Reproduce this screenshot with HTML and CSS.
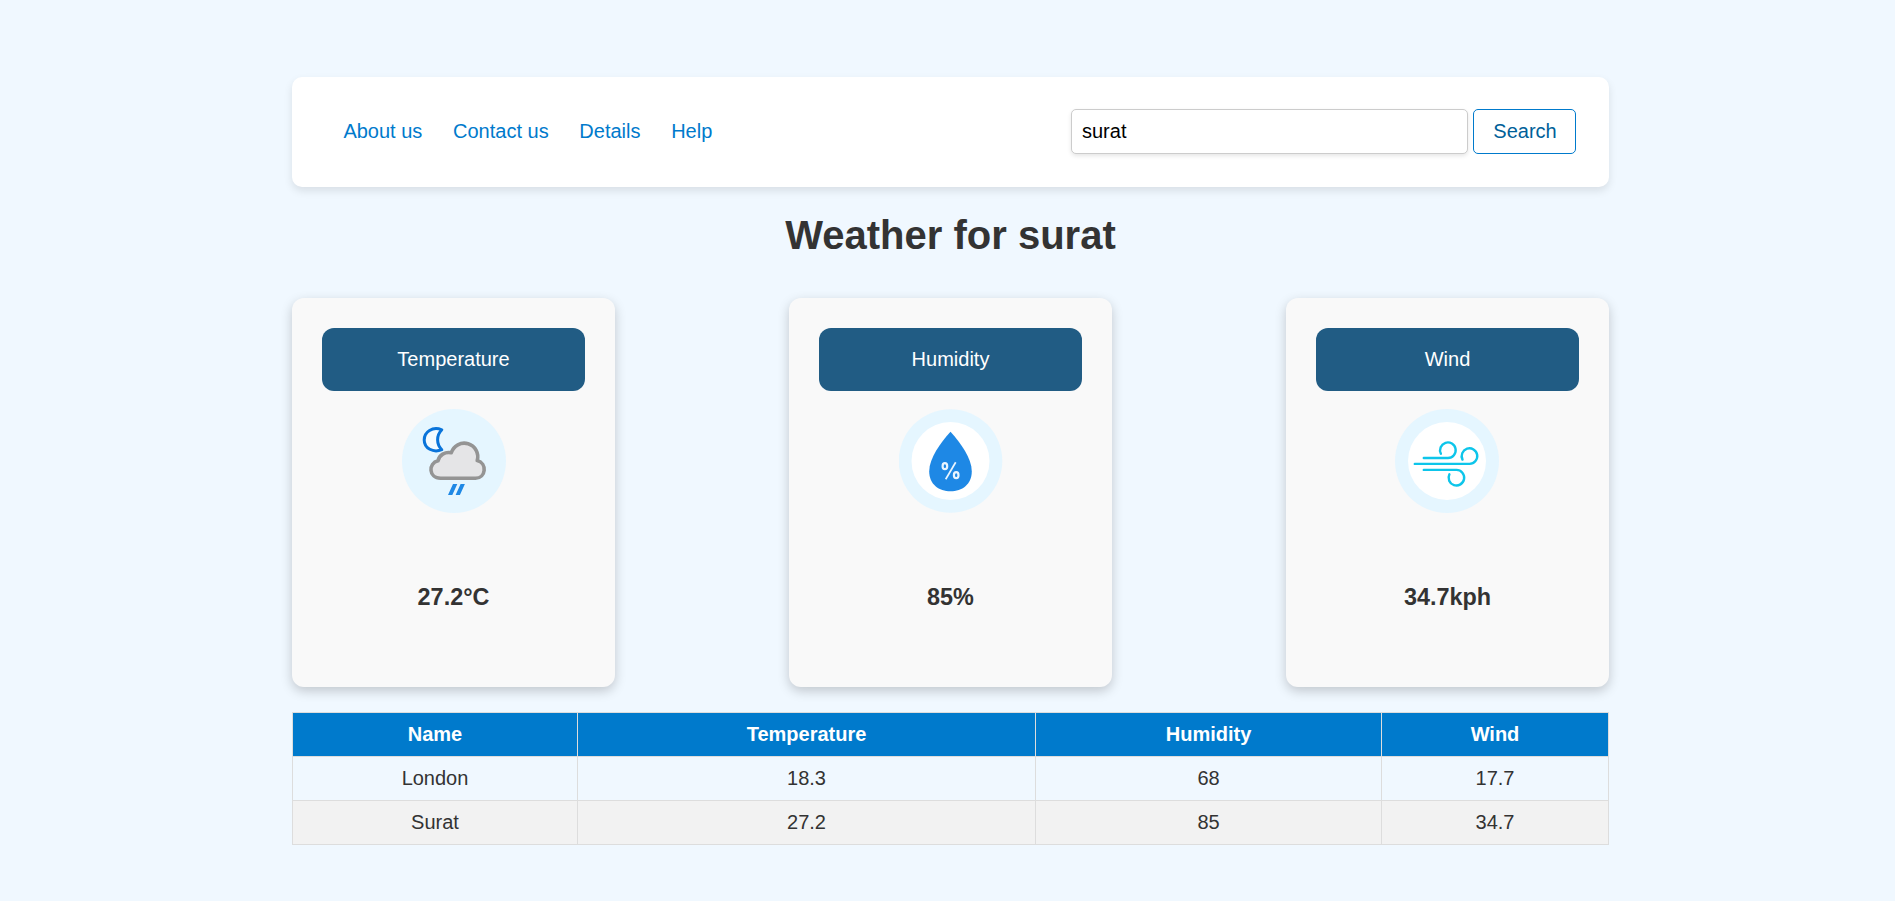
FILE: index.html
```html
<!DOCTYPE html>
<html lang="en">
<head>
<meta charset="utf-8">
<title>Weather</title>
<link rel="stylesheet" href="styles.css">
</head>
<body>
<div class="container">
  <header class="navbar">
    <nav class="links">
      <a href="#">About us</a>
      <a href="#">Contact us</a>
      <a href="#">Details</a>
      <a href="#">Help</a>
    </nav>
    <form class="search">
      <input class="search-input" type="text" value="surat">
      <button class="search-button" type="button">Search</button>
    </form>
  </header>
  <h1 class="title">Weather for surat</h1>
  <section class="cards">
    <article class="card">
      <div class="card-label">Temperature</div>
      <svg class="icon" viewBox="0 0 104 104">
        <circle cx="52" cy="52" r="52" fill="#e5f6ff"/>
        <path d="M39.800 20.800C30.500 17 22.200 23 22.200 31c0 8.300 9 13.200 17.600 9.700-5.600-5.700-5.600-14.200 0-19.900z" fill="#f4fbff" stroke="#0a74da" stroke-width="3" stroke-linejoin="round"/>
        <path d="M38.500 69.200C26.500 69.200 26 54 36 51.800C37.200 46 43 42.500 49.300 43.800A13.300 13.300 0 0 1 75.200 51.600C85.500 54 84 69.200 73.500 69.200z" fill="#e5e5e7" stroke="#949494" stroke-width="3.600" stroke-linejoin="round"/>
        <path d="M51 75h4.300l-5 11h-4.300zM58.600 75h4.300l-5 11h-4.300z" fill="#1e88e5"/>
      </svg>
      <h3 class="value">27.2°C</h3>
    </article>
    <article class="card">
      <div class="card-label">Humidity</div>
      <svg class="icon" viewBox="0 0 104 104">
        <circle cx="51.500" cy="52" r="51.800" fill="#e5f6ff"/>
        <circle cx="51.500" cy="52" r="39" fill="#fff"/>
        <path d="M51.500 22.800C41.500 34 30.200 49 30.200 62.500 30.200 75.300 40 82.300 51.500 82.300s21.300-7 21.300-19.800C72.800 49 61.500 34 51.500 22.800z" fill="#1e88e5"/>
        <g fill="none" stroke="#eaf5ff">
          <ellipse cx="45.900" cy="57.200" rx="2.300" ry="3" stroke-width="2.200"/>
          <ellipse cx="57.200" cy="66.200" rx="2.300" ry="3" stroke-width="2.200"/>
          <path d="M56.700 53.200 46.700 70.200" stroke-width="1.700"/>
        </g>
      </svg>
      <h3 class="value">85%</h3>
    </article>
    <article class="card">
      <div class="card-label">Wind</div>
      <svg class="icon" viewBox="0 0 104 104">
        <circle cx="52" cy="52" r="52" fill="#e5f6ff"/>
        <circle cx="52" cy="52" r="39" fill="#fff"/>
        <g fill="none" stroke="#0dc5ea" stroke-width="2.400" stroke-linecap="round">
          <path d="M28.800 49H53a7.800 7.800 0 1 0-7.100-4.300"/>
          <path d="M19.800 54.900h54.800a7.800 7.800 0 1 0-7.100-4.300"/>
          <path d="M28.800 60.900H61.500a7.800 7.800 0 1 1-7.100 4.300"/>
        </g>
      </svg>
      <h3 class="value">34.7kph</h3>
    </article>
  </section>
  <table class="history">
    <colgroup><col class="col-name"><col class="col-temperature"><col class="col-humidity"><col class="col-wind"></colgroup>
    <thead>
      <tr><th>Name</th><th>Temperature</th><th>Humidity</th><th>Wind</th></tr>
    </thead>
    <tbody>
      <tr><td>London</td><td>18.3</td><td>68</td><td>17.7</td></tr>
      <tr><td>Surat</td><td>27.2</td><td>85</td><td>34.7</td></tr>
    </tbody>
  </table>
</div>
</body>
</html>
```
FILE: styles.css
```css
* { box-sizing: border-box; }

body {
  margin: 0;
  background: #f0f8ff;
  color: #333;
  font: 20px/23px "Liberation Sans", Arial, sans-serif;
}

.container {
  width: 1317px;
  margin: 0 0 0 292px;
  padding-top: 77px;
}

.navbar {
  display: flex;
  align-items: center;
  justify-content: space-between;
  height: 110px;
  padding: 0 33px 1px 51.4px;
  background: #fff;
  border-radius: 10px;
  box-shadow: 0 4px 8px rgba(0, 0, 0, 0.1);
}

.links { display: flex; gap: 30.7px; }
.links a { color: #007acc; text-decoration: none; }

.search { display: flex; gap: 5px; }

.search-input,
.search-button {
  height: 45px;
  border-radius: 5px;
  background: #fff;
  font: inherit;
}

.search-input {
  width: 397px;
  padding: 0 10px;
  border: 1px solid #ccc;
  color: #000;
  box-shadow: 0 2px 4px rgba(0, 0, 0, 0.1);
}

.search-button {
  width: 103px;
  padding: 0 0 0 1px;
  border: 1px solid #007acc;
  color: #005f99;
}

.title {
  margin: 25px 0 40px;
  font-size: 40px;
  line-height: 46px;
  text-align: center;
}

.cards { display: flex; justify-content: space-between; }

.card {
  display: flex;
  flex-direction: column;
  align-items: center;
  width: 323px;
  height: 389px;
  padding: 30px;
  background: #f9f9f9;
  border-radius: 12px;
  box-shadow: 0 4px 12px rgba(0, 0, 0, 0.2);
}

.card-label {
  width: 100%;
  padding: 20px;
  background: #215c84;
  border-radius: 12px;
  color: #fff;
  text-align: center;
}

.icon {
  width: 104px;
  height: 104px;
  margin-top: 18px;
}

.card:last-child .icon { margin-right: 1px; }

.value {
  margin: 71px 0 0;
  font-size: 23.4px;
  line-height: 27px;
}

.history {
  width: 1317px;
  margin-top: 25px;
  border-collapse: collapse;
  table-layout: fixed;
  text-align: center;
}

.col-name { width: 285px; }
.col-temperature { width: 458px; }
.col-humidity { width: 346px; }
.col-wind { width: 227px; }

.history th,
.history td {
  height: 44px;
  padding: 0;
  border: 1px solid #ddd;
}

.history th { background: #007acc; color: #fff; }
.history tbody tr:nth-child(even) { background: #f2f2f2; }
```
